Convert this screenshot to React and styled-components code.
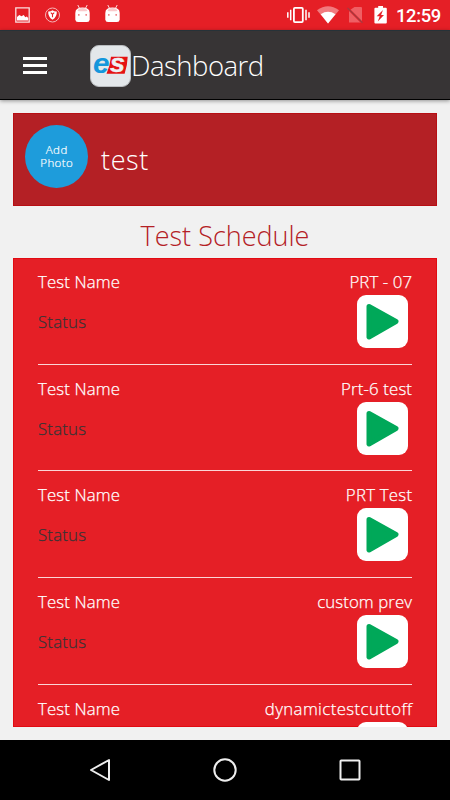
import React from "react";
import styled, { createGlobalStyle } from "styled-components";

const GlobalStyle = createGlobalStyle`
  * {
    box-sizing: border-box;
  }

  body {
    margin: 0;
    background: #f1f1f1;
    font-family: "Open Sans", "Noto Sans", sans-serif;
    font-weight: 300;
  }
`;

const Screen = styled.div`
  width: 450px;
  height: 800px;
  display: flex;
  flex-direction: column;
  overflow: hidden;
  background: #f1f1f1;
`;

const StatusBar = styled.div`
  height: 30px;
  flex: none;
  display: flex;
  justify-content: space-between;
  background: #e51f26;
`;

const StatusIcons = styled.svg`
  display: block;
  height: 30px;
`;

const StatusRight = styled.div`
  display: flex;
`;

const Clock = styled.span`
  width: 55px;
  padding-left: 1px;
  font-family: Roboto, sans-serif;
  font-size: 18.4px;
  font-weight: 500;
  line-height: 32px;
  letter-spacing: -0.35px;
  color: #fff;
`;

const Header = styled.header`
  height: 70px;
  flex: none;
  display: flex;
  align-items: center;
  padding: 1px 0 0 23px;
  background: #373435;
  border-top: 1px solid #263238;
  border-bottom: 1px solid #000;
  box-shadow: 0 1px 4px rgba(0, 0, 0, 0.4);
`;

const MenuButton = styled.button`
  width: 24px;
  height: 17px;
  display: flex;
  flex-direction: column;
  justify-content: space-between;
  margin: 0 43px 0 0;
  padding: 0;
  border: 0;
  background: none;

  span {
    height: 2.6px;
    background: #fff;
  }
`;

const Logo = styled.div`
  width: 41px;
  height: 42px;
  overflow: hidden;
  border: 1px solid #b9bcbf;
  border-radius: 9px;
  background: #e3e7ea;

  svg {
    display: block;
  }
`;

const Text = styled.span`
  display: block;
  font-size: ${(props) => props.$size}px;
  letter-spacing: ${(props) => props.$spacing || 0}px;
  line-height: ${(props) => props.$line || 24}px;
  margin-right: ${(props) => -(props.$spacing || 0)}px;
  color: ${(props) => props.$color || "#fff"};
  -webkit-text-stroke: ${(props) => props.$stroke || 0}px currentColor;
  white-space: nowrap;
`;

const Content = styled.main`
  height: 640px;
  flex: none;
  display: flex;
  flex-direction: column;
  padding: 13px 13px 13px;
`;

const Profile = styled.section`
  height: 93px;
  flex: none;
  display: flex;
  align-items: center;
  gap: 12px;
  padding: 0 12px 6px;
  background: #b42025;
  border: 1px solid #b80e14;
`;

const ProfileName = styled.div`
  padding: 6px 0 0 1px;
`;

const AddPhoto = styled.button`
  width: 63px;
  height: 63px;
  display: flex;
  flex-direction: column;
  align-items: center;
  justify-content: center;
  margin-left: -1px;
  padding: 0;
  border: 0;
  border-radius: 50%;
  background: #1e9cdb;
  font: inherit;
`;

const SectionTitle = styled.h2`
  height: 52px;
  flex: none;
  display: flex;
  align-items: center;
  justify-content: center;
  margin: 0;
  padding-top: 7px;
  font-weight: 300;
`;

const Schedule = styled.section`
  height: 469px;
  flex: none;
  overflow: hidden;
  padding: 0 25px;
  background: #e51f26;
  box-shadow: inset 0 0 0 1px #e20b12;
`;

const TestRow = styled.div`
  height: 106.67px;
  display: flex;
  justify-content: space-between;
  padding-top: 12px;
  border-bottom: 1px solid #fbd5d6;
`;

const Column = styled.div`
  display: flex;
  flex-direction: column;
  align-items: ${(props) => (props.$end ? "flex-end" : "flex-start")};
  gap: ${(props) => props.$gap}px;
`;

const PlayButton = styled.button`
  width: 51px;
  height: 53px;
  margin: 0 4px 0 0;
  padding: 0;
  border: 0;
  border-radius: 9px;
  background: #fff;

  svg {
    display: block;
  }
`;

const NavBar = styled.nav`
  height: 60px;
  flex: none;
  display: flex;
  justify-content: space-between;
  align-items: center;
  padding: 0 87px;
  background: #000;

  svg {
    display: block;
  }
`;

const tests = [
  { name: "PRT - 07", spacing: 0.1, status: "Status" },
  { name: "Prt-6 test", spacing: 0.15, status: "Status" },
  { name: "PRT Test", spacing: 0.25, status: "Status" },
  { name: "custom prev", spacing: 0.1, status: "Status" },
  { name: "dynamictestcuttoff", spacing: 0.4 },
];

const Android = ({ x }) => (
  <g transform={`translate(${x} 0)`} fill="#fff">
    <path d="M2.8 5l2 4M12.2 5l-2 4" stroke="#fbd5d6" strokeWidth="1" />
    <path d="M.3 13Q.3 7.5 7.5 7.5T14.7 13V19.5Q14.5 22 12 22H3Q.5 22 .3 19.5Z" />
    <path d="M2.5 10.2Q4 8 7.5 8T12.5 10.2L11.5 11.2H3.5Z" fill="#f9c9cb" />
    <path d="M3 14h1.6v1.8H3zM10.4 14H12v1.8h-1.6z" fill="#f0868a" />
  </g>
);

const Notifications = () => (
  <StatusIcons width="130" viewBox="0 0 130 30">
    <path d="M15.8 7.8h13.4v14.4H15.8z" fill="none" stroke="#fbdfe0" strokeWidth="1.3" />
    <path d="M17 20.5v-3.6l2.3-1.9 2.2 1.2 2.2-1.2 1.6 2.2 1.5-.7 1.4 1.5v2.5z" fill="#fff" />
    <circle cx="52.5" cy="15" r="7" fill="none" stroke="#f6b5b8" strokeWidth="1" />
    <path d="M52.5 10.3q2 1.4 4.3 1.2.3 5.4-4.3 8.2-4.6-2.8-4.3-8.2 2.3.2 4.3-1.2z" fill="#fff" />
    <path d="M50.8 12.7l1.7 1.6 1.7-1.6M52.5 14v3.3" fill="none" stroke="#e51f26" strokeWidth="1.1" />
    <Android x={75} />
    <Android x={105} />
  </StatusIcons>
);

const SystemIcons = () => (
  <StatusIcons width="111" viewBox="284 0 111 30">
    <g fill="none" stroke="#fff">
      <rect x="293.9" y="7.9" width="8.9" height="14.2" rx="1" strokeWidth="1.8" />
      <path d="M290.7 9.8v10.4M306 9.8v10.4" strokeWidth="1.5" />
      <path d="M287.8 12.3v5.4M309 12.3v5.4" strokeWidth="1.5" />
    </g>
    <path d="M317 10.2Q328 2.3 339 10.2L328 23.5z" fill="#f17a7e" />
    <path d="M320.7 14.2Q328 9.5 335.5 14.2L328 23.5z" fill="#fff" />
    <path d="M350 10l4.5-3H361q1 0 1 1v14.5h-13V11z" fill="#ef5f64" />
    <path d="M347.2 7.8l15.2 15.2" stroke="#e51f26" strokeWidth="2" />
    <path d="M347.5 8l15 14.8" stroke="#a63b40" strokeWidth="1.2" />
    <path d="M378.2 6h4.8v1.8h2.8q1 0 1 1V22.5q0 1-1 1h-10.4q-1 0-1-1V8.8q0-1 1-1h2.8z" fill="#fff" />
    <path d="M383 10l-6.3 6.3h3l-1.9 5.2 6.2-6.5h-2.9z" fill="#e51f26" />
  </StatusIcons>
);

const LogoMark = () => (
  <svg width="39" height="40" viewBox="0 0 39 40">
    <path d="M20 10.8h16.7q-.2 8.400-3.100 17H15.500q3.500-8 4.500-17z" fill="#e51212" />
    <g fontFamily="Liberation Sans, sans-serif" fontWeight="700" fontStyle="italic">
      <text x="2" y="26.5" fontSize="28" textLength="16.5" lengthAdjust="spacingAndGlyphs" fill="#1497dc">e</text>
      <text x="19" y="26" fontSize="26" textLength="15" lengthAdjust="spacingAndGlyphs" fill="#edf0f2" stroke="#edf0f2" strokeWidth=".4">s</text>
    </g>
  </svg>
);

const App = () => {
  return (
    <>
      <GlobalStyle />
      <Screen>
        <StatusBar>
          <Notifications />
          <StatusRight>
            <SystemIcons />
            <Clock>12:59</Clock>
          </StatusRight>
        </StatusBar>

        <Header>
          <MenuButton aria-label="Menu">
            <span />
            <span />
            <span />
          </MenuButton>
          <Logo>
            <LogoMark />
          </Logo>
          <Text $size={27.5} $line={38} $spacing={-0.5}>Dashboard</Text>
        </Header>

        <Content>
          <Profile>
            <AddPhoto>
              <Text $size={11.5} $line={12.5} $spacing={0.5} $stroke={0.2}>Add</Text>
              <Text $size={11.5} $line={12.5} $spacing={0.4} $stroke={0.2}>Photo</Text>
            </AddPhoto>
            <ProfileName>
              <Text $size={27} $line={36} $spacing={0.6}>test</Text>
            </ProfileName>
          </Profile>

          <SectionTitle>
            <Text $size={27} $line={36} $color="#b42025">Test Schedule</Text>
          </SectionTitle>

          <Schedule>
            {tests.map((test) => (
              <TestRow key={test.name}>
                <Column $gap={16}>
                  <Text $size={16.8} $spacing={0.15} $stroke={0.25}>Test Name</Text>
                  {test.status && (
                    <Text $size={16.8} $spacing={0.2} $stroke={0.25} $color="#373435">
                      {test.status}
                    </Text>
                  )}
                </Column>
                <Column $end $gap={1}>
                  <Text $size={16.8} $spacing={test.spacing} $stroke={0.25}>{test.name}</Text>
                  <PlayButton aria-label="Play">
                    <svg width="51" height="53" viewBox="0 0 51 53">
                      <path
                        d="M12 11.5L39 26.5 12 42z"
                        fill="#00a859"
                        stroke="#00a859"
                        strokeWidth="5"
                        strokeLinejoin="round"
                      />
                    </svg>
                  </PlayButton>
                </Column>
              </TestRow>
            ))}
          </Schedule>
        </Content>

        <NavBar>
          <svg width="26" height="26" viewBox="0 0 26 26">
            <path d="M4 13L22 3V23z" fill="none" stroke="#eee" strokeWidth="2" strokeLinejoin="round" />
          </svg>
          <svg width="26" height="26" viewBox="0 0 26 26">
            <circle cx="13" cy="13" r="10.7" fill="none" stroke="#eee" strokeWidth="2" />
          </svg>
          <svg width="26" height="26" viewBox="0 0 26 26">
            <rect x="3.5" y="3.5" width="19" height="19" rx=".7" fill="none" stroke="#eee" strokeWidth="2" />
          </svg>
        </NavBar>
      </Screen>
    </>
  );
};
export default App;
